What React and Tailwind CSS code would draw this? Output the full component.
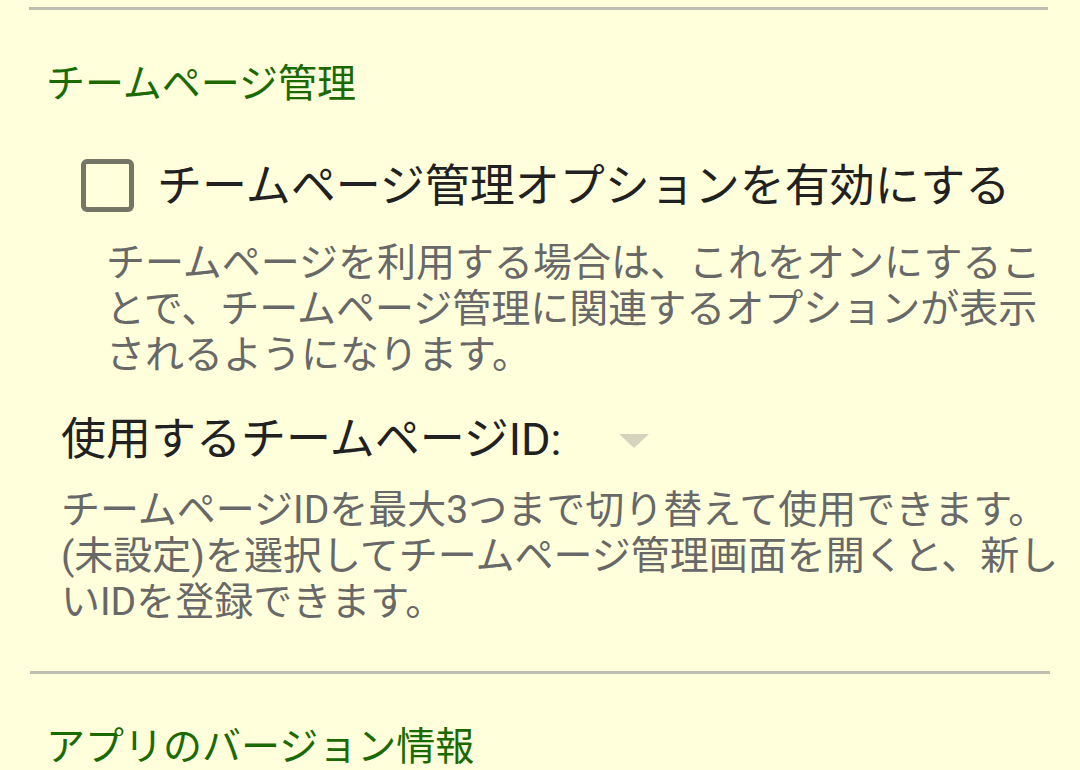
import React from 'react'

const font = { fontFamily: 'Roboto, "Noto Sans CJK JP", sans-serif' }

function Divider({ className }) {
    return <div className={`h-[3px] bg-[#bdbdb2] ${className}`} />
}

function SectionTitle({ children, className }) {
    return (
        <div className={`pl-[46px] text-[39px] leading-[46px] text-[#1b6a00] ${className}`}>
            {children}
        </div>
    )
}

export default function App() {
    return (
        <div className="w-[1080px] h-[770px] overflow-hidden bg-[#ffffdc] pt-[7px]" style={font}>
            <Divider className="ml-[29px] w-[1019px]" />

            <SectionTitle className="mt-[51px]">チームページ管理</SectionTitle>

            {/* enable option */}
            <div className="mt-[52px] h-[53px] pl-[81px] flex items-center">
                <div className="w-[53px] h-[53px] rounded-[6px] border-[5px] border-[#767666] shrink-0" />
                <span className="ml-[23px] mt-[3px] text-[45px] leading-[52px] text-[#212121]">
                    チームページ管理オプションを有効にする
                </span>
            </div>
            <p className="mt-[28px] ml-[106px] w-[945px] text-[39px] leading-[46px] text-[#686868]">
                チームページを利用する場合は、これをオンにすることで、チームページ管理に関連するオプションが表示されるようになります。
            </p>

            {/* team page id */}
            <div className="mt-[36px] pl-[61px] flex items-center h-[52px]">
                <span className="text-[45px] leading-[52px] text-[#212121]">使用するチームページID:</span>
                <svg width="30" height="14" viewBox="0 0 30 14" className="ml-[58px] mt-[2px]">
                    <polygon points="0,0 30,0 15,14" fill="#d5d5bf" />
                </svg>
            </div>
            <p className="mt-[21px] ml-[61px] w-[1010px] text-[39px] leading-[46px] text-[#686868]">
                チームページIDを最大3つまで切り替えて使用できます。(未設定)を選択してチームページ管理画面を開くと、新しいIDを登録できます。
            </p>

            <Divider className="mt-[46px] ml-[30px] w-[1020px]" />

            <SectionTitle className="mt-[50px]">アプリのバージョン情報</SectionTitle>
        </div>
    )
}
